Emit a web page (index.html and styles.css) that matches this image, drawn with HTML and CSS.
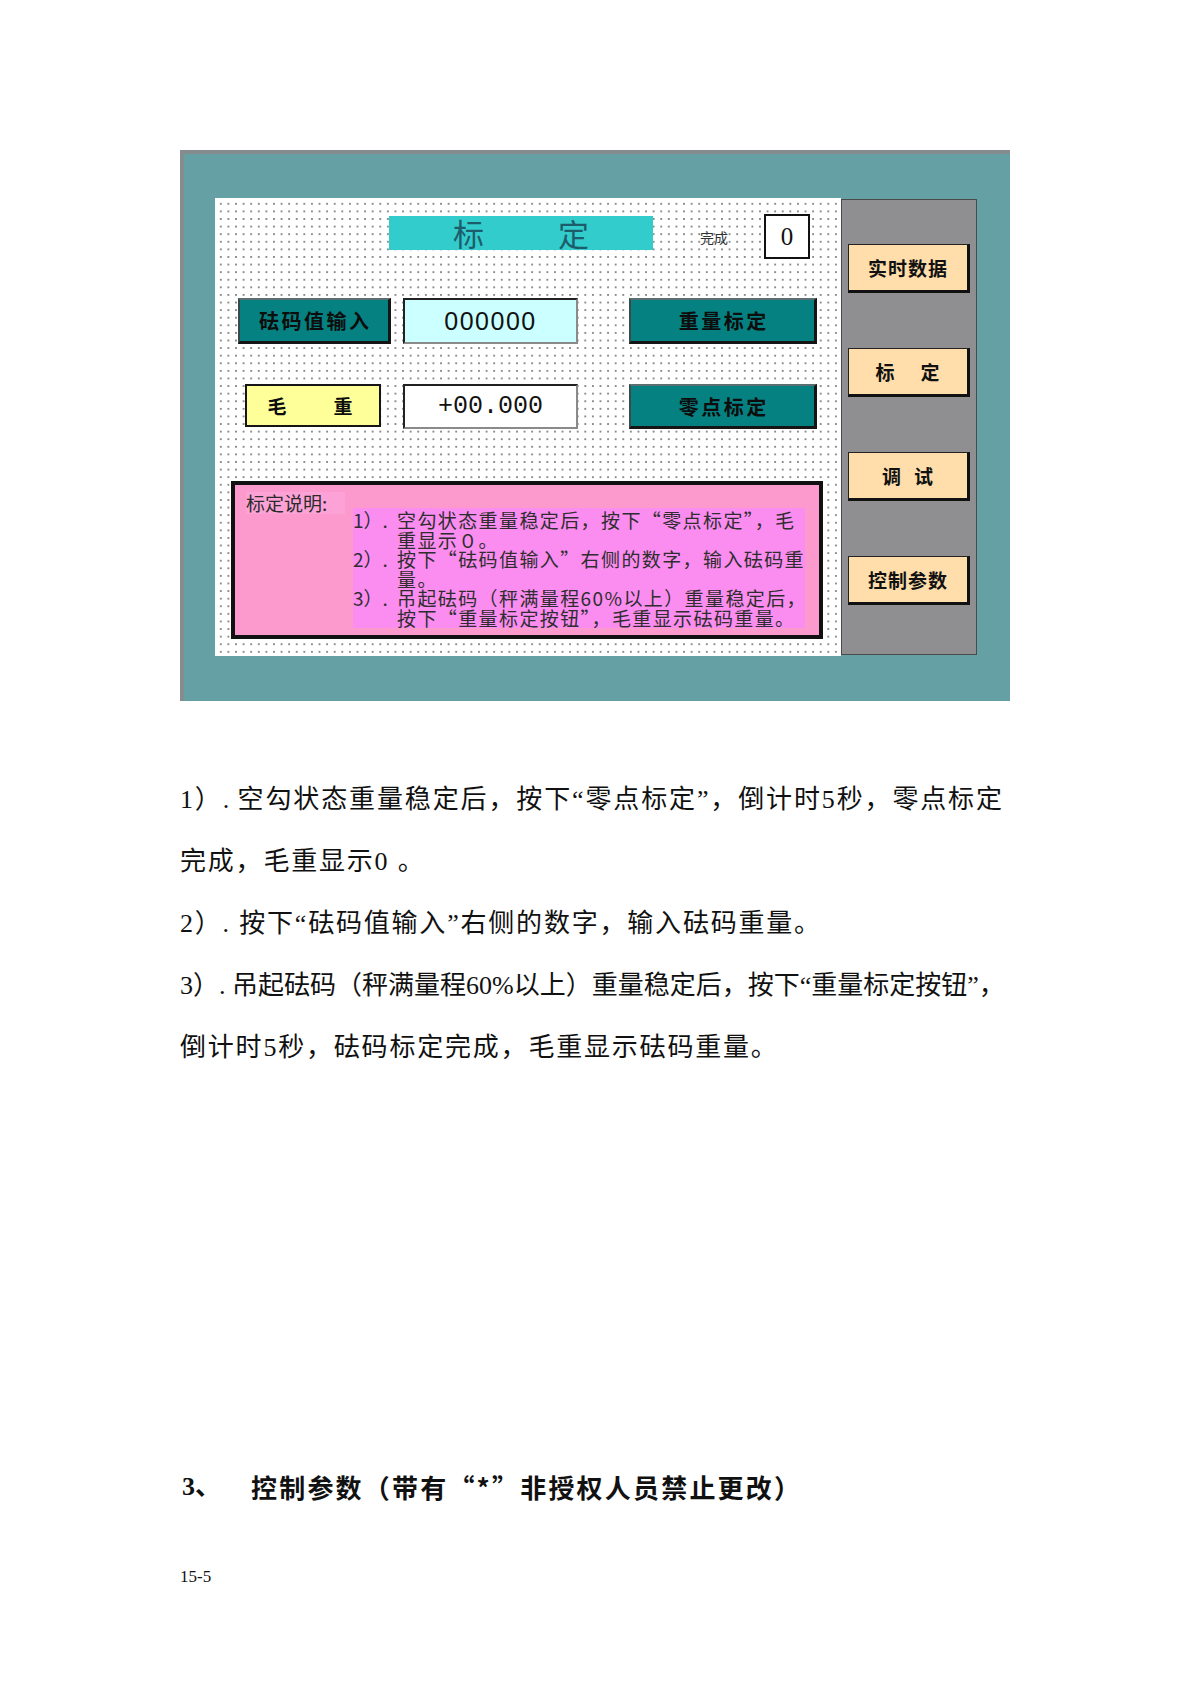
FILE: index.html
```html
<!DOCTYPE html>
<html lang="zh-CN">
<head>
<meta charset="utf-8">
<title>标定</title>
<link rel="stylesheet" href="styles.css">
</head>
<body>
<div class="page">
  <div class="hmi">
    <div class="screen">
      <div class="row row-top">
        <div class="title"><span>标</span><span>定</span></div>
        <div class="done-label">完成</div>
        <div class="done-box">0</div>
      </div>
      <div class="row row-1">
        <div class="btn teal btn-left">砝码值输入</div>
        <div class="field field-cyan">000000</div>
        <div class="btn teal btn-right">重量标定</div>
      </div>
      <div class="row row-2">
        <div class="btn yellow"><span>毛</span><span>重</span></div>
        <div class="field field-white">+00.000</div>
        <div class="btn teal btn-right">零点标定</div>
      </div>
      <div class="note">
        <div class="note-label">标定说明:</div>
        <div class="note-body">
          <div class="item"><span class="num">1）.</span><span class="txt">空勾状态重量稳定后，按下“零点标定”，毛<br>重显示０。</span></div>
          <div class="item"><span class="num">2）.</span><span class="txt">按下“砝码值输入”右侧的数字，输入砝码重<br>量。</span></div>
          <div class="item"><span class="num">3）.</span><span class="txt">吊起砝码（秤满量程60%以上）重量稳定后，<br>按下“重量标定按钮”，毛重显示砝码重量。</span></div>
        </div>
      </div>
    </div>
    <div class="side">
      <div class="side-btn">实时数据</div>
      <div class="side-btn wide"><span>标</span><span>定</span></div>
      <div class="side-btn mid"><span>调</span><span>试</span></div>
      <div class="side-btn">控制参数</div>
    </div>
  </div>

  <div class="body-text">
    <div class="line full">1）. 空勾状态重量稳定后，按下“零点标定”，倒计时5秒，零点标定</div>
    <div class="line">完成，毛重显示0 。</div>
    <div class="line">2）. 按下“砝码值输入”右侧的数字，输入砝码重量。</div>
    <div class="line full">3）. 吊起砝码（秤满量程60%以上）重量稳定后，按下“重量标定按钮”，</div>
    <div class="line">倒计时5秒，砝码标定完成，毛重显示砝码重量。</div>
  </div>

  <h2 class="heading"><span class="h-num">3、</span><span class="h-text">控制参数（带有<span class="q">“*”</span>非授权人员禁止更改）</span></h2>

  <div class="footer">15-5</div>
</div>
</body>
</html>
```

FILE: styles.css
```css
html, body {
  margin: 0;
  padding: 0;
  background: #ffffff;
}

.page {
  padding: 150px 0 0 180px;
  font-family: "Liberation Serif", "Noto Sans CJK SC", serif;
  color: #111;
}

/* ---------- HMI panel ---------- */
.hmi {
  width: 830px;
  height: 551px;
  box-sizing: border-box;
  background: #64a0a4;
  border-top: 4px solid #858c8d;
  border-left: 4px solid #858c8d;
  padding: 44px 33px 45px 31px;
  display: flex;
  align-items: flex-start;
}

.screen {
  width: 626px;
  height: 458px;
  background-color: #ffffff;
  background-image: radial-gradient(circle, #8c8c8c 0.7px, transparent 1.1px);
  background-size: 7.6px 7.6px;
  background-position: 2px 2px;
  display: flex;
  flex-direction: column;
}

.row {
  display: flex;
  align-items: flex-start;
}

.row-top {
  margin-top: 16px;
  height: 45px;
}

.title {
  margin-left: 174px;
  margin-top: 2px;
  width: 264px;
  height: 34px;
  background: #33cccc;
  display: flex;
  justify-content: center;
  align-items: center;
  gap: 74px;
  font-family: "Noto Sans CJK SC", sans-serif;
  font-size: 31px;
  line-height: 34px;
  color: #1d5d6b;
}

.done-label {
  margin-left: 47px;
  width: 64px;
  height: 45px;
  line-height: 45px;
  font-family: "Noto Sans CJK SC", sans-serif;
  font-size: 14px;
  color: #333;
  padding-top: 1px;
  box-sizing: border-box;
}

.done-box {
  width: 46px;
  height: 45px;
  box-sizing: border-box;
  border: 2px solid #111;
  background: #fff;
  text-align: center;
  font-family: "Liberation Serif", serif;
  font-size: 25px;
  line-height: 41px;
  color: #111;
}

.row-1 {
  margin-top: 39px;
  height: 46px;
}

.row-2 {
  margin-top: 40px;
  height: 45px;
}

.btn {
  box-sizing: border-box;
  display: flex;
  justify-content: center;
  align-items: center;
  font-family: "Noto Sans CJK SC", sans-serif;
  font-weight: 700;
  font-size: 20px;
  color: #0d0d0d;
}

.teal {
  background: #068181;
  border-top: 2px solid #5c6f70;
  border-left: 2px solid #3a4a4a;
  border-right: 3px solid #151515;
  border-bottom: 3px solid #151515;
  letter-spacing: 2.5px;
  text-indent: 2.5px;
}

.row-1 .btn-left {
  margin-left: 23px;
  width: 153px;
  height: 46px;
}

.btn-right {
  margin-left: 51px;
  width: 188px;
  height: 46px;
}

.row-2 .btn-right {
  height: 45px;
}

.yellow {
  margin-left: 30px;
  width: 136px;
  height: 43px;
  background: #ffff99;
  border: 2px solid #151515;
  gap: 47px;
  font-size: 19px;
  padding-right: 6px;
}

.field {
  box-sizing: border-box;
  width: 175px;
  text-align: center;
  border-top: 2px solid #222;
  border-left: 2px solid #222;
  border-right: 2px solid #8a8a8a;
  border-bottom: 2px solid #8a8a8a;
  color: #111;
}

.row-1 .field {
  margin-left: 12px;
}

.row-2 .field {
  margin-left: 22px;
}

.field-cyan {
  height: 46px;
  background: #ccffff;
  font-family: "Liberation Sans", sans-serif;
  font-size: 25px;
  letter-spacing: 1.5px;
  line-height: 42px;
}

.field-white {
  height: 45px;
  background: #ffffff;
  font-family: "Liberation Mono", monospace;
  font-size: 25px;
  line-height: 41px;
}

/* ---------- note box ---------- */
.note {
  margin-top: 52px;
  margin-left: 16px;
  width: 592px;
  height: 158px;
  box-sizing: border-box;
  border: 4px solid #111;
  background: #fd9acd;
  display: flex;
  align-items: flex-start;
}

.note-label {
  margin-left: 11px;
  margin-top: 7px;
  width: 99px;
  height: 22px;
  background: #fca2d6;
  font-family: "Noto Sans CJK SC", sans-serif;
  font-size: 19px;
  line-height: 22px;
  color: #2b2b2b;
}

.note-body {
  margin-left: 8px;
  margin-top: 23px;
  width: 452px;
  height: 120px;
  box-sizing: border-box;
  padding-top: 2px;
  background: #fb8cf0;
  font-family: "Noto Sans CJK SC", sans-serif;
  font-size: 19px;
  line-height: 19.6px;
  color: #2e2e2e;
  white-space: nowrap;
}

.item {
  display: flex;
}

.num {
  width: 44px;
  flex: none;
}

.txt {
  letter-spacing: 1.4px;
}

/* ---------- side column ---------- */
.side {
  margin-top: 1px;
  width: 136px;
  height: 456px;
  box-sizing: border-box;
  background: #8f8e90;
  border: 1px solid #4a4a4a;
  padding-top: 44px;
  padding-left: 6px;
  display: flex;
  flex-direction: column;
  gap: 55px;
}

.side-btn {
  width: 122px;
  height: 49px;
  box-sizing: border-box;
  background: #ffdeab;
  border-top: 1px solid #222;
  border-left: 1px solid #222;
  border-right: 3px solid #111;
  border-bottom: 3px solid #111;
  display: flex;
  justify-content: center;
  align-items: center;
  font-family: "Noto Sans CJK SC", sans-serif;
  font-weight: 700;
  font-size: 19px;
  letter-spacing: 1px;
  color: #111;
}

.side-btn.wide {
  gap: 25px;
}

.side-btn.mid {
  gap: 12px;
}

/* ---------- body text ---------- */
.body-text {
  margin-top: 68px;
  width: 822px;
  font-size: 26px;
  line-height: 62px;
  color: #111;
}

.line {
  white-space: nowrap;
  letter-spacing: 1.8px;
}

.line.full {
  letter-spacing: 0;
  text-align: justify;
  text-align-last: justify;
}

.heading {
  margin: 388px 0 0 0;
  font-family: "Noto Sans CJK SC", sans-serif;
  font-weight: 700;
  font-size: 26px;
  line-height: 40px;
  color: #111;
  display: flex;
}

.h-num {
  display: inline-block;
  width: 71px;
  padding-left: 2px;
  box-sizing: border-box;
  font-family: "Liberation Serif", "Noto Sans CJK SC", serif;
}

.h-text {
  letter-spacing: 2.2px;
}

.q {
  font-family: "Noto Sans CJK SC", sans-serif;
}

.footer {
  margin-top: 60px;
  font-family: "Liberation Serif", serif;
  font-size: 17px;
  line-height: 20px;
  color: #111;
}
```
